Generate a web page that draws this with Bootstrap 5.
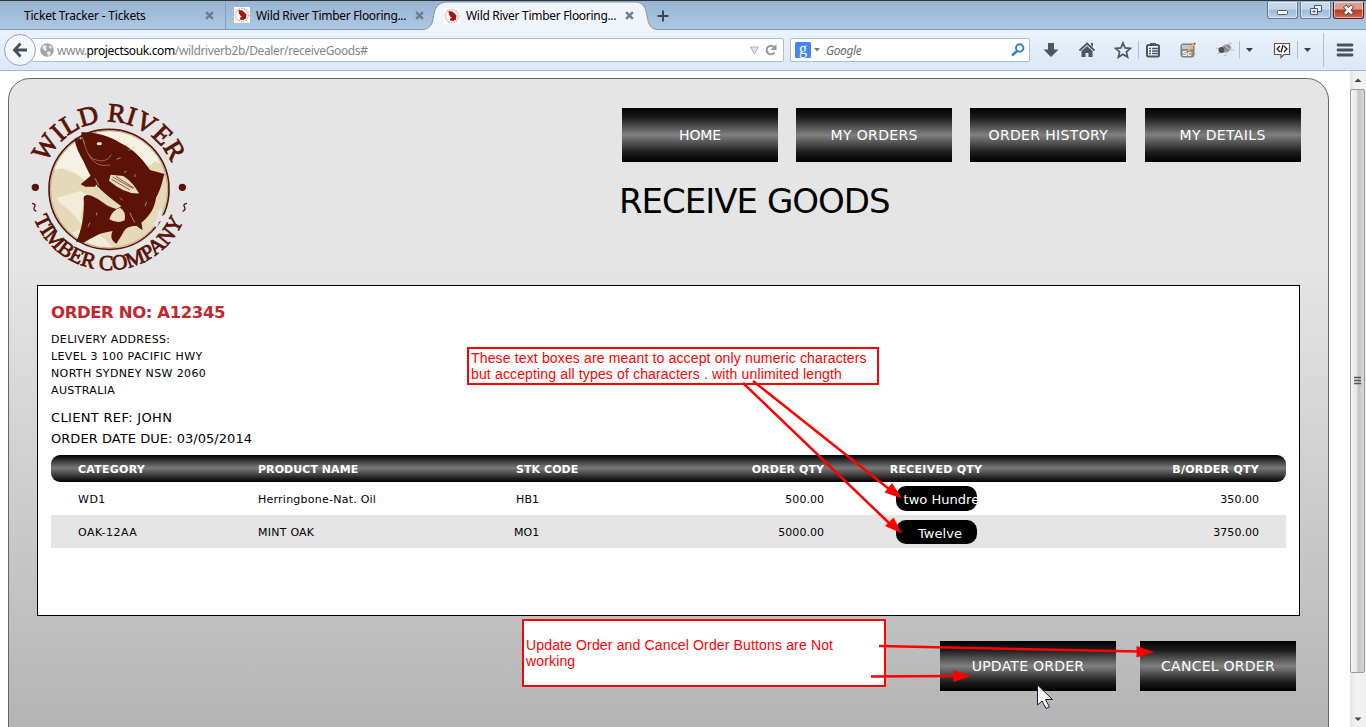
<!DOCTYPE html>
<html lang="en">
<head>
<meta charset="utf-8">
<title>Wild River Timber Flooring - Receive Goods</title>
<link href="https://cdn.jsdelivr.net/npm/bootstrap@5.3.0/dist/css/bootstrap.min.css" rel="stylesheet">
<style>
html,body{height:727px;overflow:hidden}
body{font-family:"DejaVu Sans",Verdana,sans-serif;font-size:11px;color:#000;background:#fff}
svg{display:block;flex:none}
/* browser window */
.chrome{height:71px;font-family:"Noto Sans","Open Sans",sans-serif;font-size:12px}
.tabstrip{height:30px;background:linear-gradient(#98b4d4,#aec8e2);border-top:1px solid #333;border-bottom:1px solid #809cb8}
.tab{height:28px;white-space:nowrap}
.tab span,.tab-front span{letter-spacing:-.3px;padding-top:1px}
.tab1{width:226px;padding-left:24px;border-right:1px solid #829fbe}
.tab1 span{letter-spacing:-.2px}
.tab2{width:207px;padding-left:8px}
.tab-front{width:216px;height:29px;margin-bottom:-1px;padding-left:11px;white-space:nowrap}
.tab-label{margin-left:6px}
.x1{margin-right:11px}.x2{margin-right:9px}.x3{margin-right:15px}
.tab-shape{left:-17px;top:0}
.winctl{gap:2px;margin-right:2px;padding-top:1px}
.winbtn{width:31px;height:17px;border:1px solid #5f7896;border-top:0;border-radius:0 0 3px 3px;background:linear-gradient(#c5d7ea 45%,#9fbad7 50%,#b9d0e8);box-shadow:inset 0 0 0 1px #ffffff80}
.winbtn.close-win{border-color:#5a1a1a;background:linear-gradient(#dc9c8e 45%,#b93a22 50%,#cf6a50)}
.navtools{height:41px;background:linear-gradient(#ebf2fb,#dae8f7);border-bottom:1px solid #9fb7d2}
.field{height:24px;background:#fff;border:1px solid #a9bdd3;border-radius:2px}
.url{width:753px;margin-left:-5px;padding-left:8px;color:#868686}
.url b{font-weight:400;color:#000}
.url-text{margin-left:3px;letter-spacing:-.36px;padding-top:2px}
.find{width:240px;margin-left:6px;padding:0 4px}
.find i{color:#6a6a6a;letter-spacing:-.4px;padding-top:2px}
.back{width:32px;height:32px;border-radius:50%;border:1px solid #8ea5be;background:#f5f9fd;margin-left:4px;z-index:2}
.toolset{margin-left:3px}
.tool{height:38px}
.vsep{width:1px;height:18px;background:#aebfd2}
.vsep-tall{height:34px}
/* page */
.page-area{height:656px}
.shell{width:1321px;height:720px;margin:7px 0 0 8px;border:1px solid #666;border-radius:22px 22px 0 0;background:linear-gradient(#e5e5e5 0,#e5e5e5 190px,#b3b3b3 660px)}
.head{height:206px;padding-left:14px}
.logo{margin:12px 0 0 -3px}
.menu{padding-top:29px;gap:18.2px;margin-left:422px}
.btn-steel{width:156px;height:54px;background:linear-gradient(#000,#1c1c1c 18%,#808080 50%,#1c1c1c 82%,#000);color:#fff;border:0;border-radius:0;padding:0;font-size:14px;line-height:54px;letter-spacing:.36px;white-space:nowrap}
.btn-steel:first-child{letter-spacing:-.1px}
.title{font-size:34px;line-height:40px;font-weight:400;margin:19px 0 0 419px;letter-spacing:-1px}
.panel{width:1263px;height:331px;margin-left:28px;border:1px solid #000;background:#fff;padding:16px 13px}
.order-no{font-size:16.5px;line-height:22px;font-weight:700;color:#c1272d;margin:0 0 7px;letter-spacing:-.4px}
address{line-height:17px;margin:0 0 8px;letter-spacing:.37px}
.ref{font-size:13px;line-height:21px}
.client{letter-spacing:.33px}
.due{letter-spacing:.05px}
.goods{table-layout:fixed;width:1235px;margin-top:6px;border-collapse:separate;border-spacing:0}
.goods th{height:27px;padding:3px 27px 0;color:#fff;font-weight:700;background:linear-gradient(#000,#7a7a7a 48%,#000);letter-spacing:.06px}
.goods th:first-child{border-radius:9px 0 0 9px;letter-spacing:.25px}
.goods th:last-child{border-radius:0 9px 9px 0;letter-spacing:.25px}
.goods td{height:33px;padding:3px 27px 0;letter-spacing:.03px}
.goods td:nth-child(1){letter-spacing:.5px}
.goods td:nth-child(2){letter-spacing:.24px}
.goods tbody tr:nth-child(2){background:#e5e5e5}
.goods th.mid{padding:3px 0 0;text-align:center;letter-spacing:.25px}
.goods td.mid{padding:0;text-align:center}
.code{display:inline-block;width:25px;text-align:right;margin-left:-2px}
.qty{display:block;width:81px;height:25px;margin:0 auto;background:#000;border:0;border-radius:10px;color:#fff;font-size:13px;padding:0 0 0 8px;white-space:nowrap;line-height:27px;text-align:left}
.qty-b{height:24px;position:relative}
.actions{padding:25px 32px 0 0;gap:24px}
.actions .btn-steel{height:50px;line-height:50px;letter-spacing:.25px}
.actions .wide{width:176px}
/* scrollbar */
.sbar{width:16px;background:linear-gradient(90deg,#e6e6e6,#f2f2f2 40%,#f0f0f0)}
.thumb{width:15px;height:584px;border:1px solid #999;border-radius:2px;background:linear-gradient(90deg,#f5f5f5,#e6e6e8 45%,#c6c6ca 55%,#d6d6da)}
/* review notes laid over the page */
.note{font-family:"Liberation Sans",Arial,sans-serif;font-size:14px;line-height:16px;letter-spacing:.15px;color:#f00;background:#fff;border:2px solid #f00;padding:0 2px;white-space:nowrap}
.note1{left:467px;top:347px;width:412px;height:38px;padding-top:1px}
.note2{left:522px;top:619px;width:364px;height:68px;padding-top:16px}
</style>
</head>
<body class="position-relative">
<svg width="0" height="0" class="position-absolute"><defs>
<symbol id="x" viewBox="0 0 8 8"><path d="M1 1l6 6M7 1L1 7" stroke="#6c7d90" stroke-width="2.200"/></symbol>
<symbol id="fav" viewBox="0 0 16 16"><path fill="#fff" d="M0 0h16v16H0z"/><circle cx="8" cy="8" r="6.600" fill="none" stroke="#dcb9b4" stroke-width="1.800" stroke-dasharray="1.500 1"/><path d="M4.500 3l4 .5 4 4-.5 4-3 1.500-3-.5v-2l1-1-2-3z" fill="#9c1a14"/><path d="M6 9l2 .5-1.500 1.500z" fill="#e8cfc8"/></symbol>
</defs></svg>
<header class="chrome">
  <div class="tabstrip d-flex">
    <div class="tab tab1 d-flex align-items-center"><span class="flex-grow-1">Ticket Tracker - Tickets</span><svg class="x1" width="9" height="9"><use href="#x"/></svg></div>
    <div class="tab tab2 d-flex align-items-center"><svg width="16" height="16"><use href="#fav"/></svg><span class="flex-grow-1 tab-label">Wild River Timber Flooring...</span><svg class="x2" width="9" height="9"><use href="#x"/></svg></div>
    <div class="tab-front d-flex align-items-center position-relative">
      <svg class="tab-shape position-absolute" width="244" height="30"><path d="M6 28.500c6 0 9.500-3 11-10 1.500-11 4-17 14-17.500H219C229 1 230 9 231.500 17c1 7 4 11.500 10 11.500V30H6z" fill="#f0f5fc"/><path d="M6 28.500c6 0 9.500-3 11-10 1.500-11 4-17 14-17.500H219C229 1 230 9 231.500 17c1 7 4 11.500 10 11.500" fill="none" stroke="#7c98b6"/></svg>
      <svg class="position-relative" width="16" height="16"><use href="#fav"/></svg><span class="flex-grow-1 position-relative tab-label">Wild River Timber Flooring...</span><svg class="position-relative x3" width="9" height="9"><use href="#x"/></svg>
    </div>
    <svg class="position-relative" width="28" height="28"><path d="M14 9.500v11M8.500 15h11" stroke="#3b4753" stroke-width="2"/></svg>
    <div class="winctl ms-auto d-flex">
      <div class="winbtn"><svg width="29" height="16"><rect x="9.500" y="8.500" width="10" height="4" rx="1" fill="#fff" stroke="#4d5a6b"/></svg></div>
      <div class="winbtn"><svg width="29" height="16" fill="#eef4fa" stroke="#4d5a6b"><path d="M13.500 3.500h7v6h-7z"/><path d="M9.500 6.500h7v6h-7z"/><path d="M12 9h2v1h-2z"/></svg></div>
      <div class="winbtn close-win"><svg width="29" height="16"><path d="M10.500 4l8 8M18.500 4l-8 8" stroke="#4d4550" stroke-width="4.400"/><path d="M11 4.500l7 7M18 4.500l-7 7" stroke="#fff" stroke-width="2.500"/></svg></div>
    </div>
  </div>
  <div class="navtools d-flex align-items-center">
    <div class="back d-flex align-items-center justify-content-center flex-shrink-0"><svg width="16" height="16"><path d="M8.500 1.500L2.500 8l6 6.500M3 8h12" fill="none" stroke="#46525e" stroke-width="2.800"/></svg></div>
    <div class="field url d-flex align-items-center flex-shrink-0">
      <svg width="14" height="14"><circle cx="7" cy="7" r="6.800" fill="#a3a3a3"/><path d="M2 3l3-1 2 1-1 2 1 2-2 1-2-2zM9 2l3 2-1 2-2-1zM8 8l3 1-1 3-2 1-1-3z" fill="#e9e9e9"/></svg>
      <span class="flex-grow-1 url-text">www.<b>projectsouk.com</b>/wildriverb2b/Dealer/receiveGoods#</span>
      <svg width="34" height="20"><path d="M1.500 7h8l-4 7z" fill="#dde3e8" stroke="#a9b4bf"/><path d="M25 7A4.300 4.300 0 1 0 25.500 12.500" fill="none" stroke="#8d99a6" stroke-width="2"/><path d="M27.500 4v6h-6z" fill="#8d99a6"/></svg>
    </div>
    <div class="field find d-flex align-items-center flex-shrink-0">
      <svg width="16" height="16"><rect width="16" height="16" rx="1.500" fill="#4285f4"/><text x="8" y="11.500" text-anchor="middle" font-family="Liberation Serif,serif" font-size="16" fill="#fff">g</text></svg>
      <svg width="15" height="16"><path d="M3 6h6l-3 3.500z" fill="#777"/></svg>
      <i class="flex-grow-1">Google</i>
      <svg width="14" height="14"><circle cx="8.700" cy="5" r="3.700" fill="none" stroke="#3680bd" stroke-width="2"/><path d="M6 8l-5 4.500" stroke="#3680bd" stroke-width="2.500"/></svg>
    </div>
    <div class="toolset d-flex align-items-center">
      <svg class="tool" width="36" height="38"><path d="M15 12h6v6.500h4.500L18 26l-7.500-7.500H15z" fill="#4d5762"/></svg>
      <svg class="tool" width="36" height="38"><path d="M10.500 19.500L18 12.500l7.500 7" fill="none" stroke="#4d5762" stroke-width="1.800"/><path d="M22 12h2v4l-2-2zM12.500 20L18 15l5.500 5v6h-4v-4h-3v4h-4z" fill="#4d5762"/></svg>
      <svg class="tool" width="33" height="38"><path d="M18 12l2.100 4.900 5.300.5-4 3.500 1.200 5.200L18 23.300l-4.600 2.800 1.200-5.200-4-3.500 5.300-.5z" fill="none" stroke="#4d5762" stroke-width="1.700"/></svg>
      <div class="vsep"></div>
      <svg class="tool" width="29" height="38"><rect x="8" y="14" width="12" height="11.500" rx="1.500" fill="#eef4fb" stroke="#4d5762" stroke-width="2"/><path d="M11 12h6v3h-6z" fill="#4d5762"/><path d="M10 17.500h2m1 0h6m-9 2.500h2m1 0h6m-9 2.500h2m1 0h6" stroke="#4d5762" stroke-width="1.300"/></svg>
      <svg class="tool" width="40" height="38"><rect x="13" y="13" width="13" height="13" rx="2" fill="#8d8d8d" stroke="#777"/><path d="M14 14h11v4H14z" fill="#c5c5c5"/><text x="14" y="25" font-family="Liberation Sans,sans-serif" font-weight="700" font-size="8" fill="#fff">Sc</text><path d="M26.500 12.500l-6 7" stroke="#e3bb4b" stroke-width="2"/><path d="M27 12l-1 1.300" stroke="#b34b31" stroke-width="2"/></svg>
      <svg class="tool" width="31" height="38"><path d="M8 17l5 1M9 23l4-2M16 24l3 1M23 19h3M20 13l4-1" stroke="#bbb"/><ellipse cx="18" cy="17.500" rx="5.500" ry="4" transform="rotate(-25 18 17.500)" fill="#a2a2a2"/><circle cx="13.500" cy="19" r="3" fill="#505050"/><path d="M16 16l4 4m-1-6l3 3" stroke="#666"/></svg>
      <div class="vsep"></div>
      <svg class="tool" width="20" height="38"><path d="M6 17h7l-3.500 4z" fill="#333f48"/></svg>
      <svg class="tool" width="37" height="38"><path d="M14.500 12.500h15v11H24l-3 3v-3h-6.500z" fill="#fff" stroke="#555" stroke-width="1.200"/><path d="M20 15l-3 3 3 3m4-6l3 3-3 3m-1-7l-2 7.500" fill="none" stroke="#222" stroke-width="1.300"/></svg>
      <div class="vsep"></div>
      <svg class="tool" width="25" height="38"><path d="M6 17h7l-3.500 4z" fill="#333f48"/></svg>
      <div class="vsep vsep-tall"></div>
      <svg class="tool" width="42" height="38"><path d="M14 14h14M14 19h14M14 24h14" stroke="#46525d" stroke-width="2.800" stroke-linecap="round"/></svg>
    </div>
  </div>
</header>

<div class="page-area d-flex overflow-hidden">
  <main class="flex-grow-1 overflow-hidden">
    <div class="shell">
      <div class="head d-flex">
        <svg class="logo" width="180" height="190" viewBox="0 0 540 570">
          <defs><path id="arcTop" d="M80 217A203 203 0 0 1 455 219"/><path id="arcBot" d="M42 383A242 242 0 0 0 493 383"/><clipPath id="disc"><circle cx="267" cy="295" r="175"/></clipPath></defs>
          <circle cx="267" cy="295" r="180" fill="#f6f2e3" stroke="#5a1708" stroke-width="5"/>
          <g clip-path="url(#disc)"><path d="M85 240l40-8 40 14 40 30 60 30 80-50 60-45 30 12 20 10v250H85z" fill="#e6d9b8"/><path d="M110 320l70-20 20 10-20 70 80 70 30 30h-120z" fill="#f3ecd6"/><path d="M110 330q50 30 80 80l-40 20q-40-40-60-90z" fill="#e6d9b8"/></g>
          <circle cx="267" cy="295" r="176" fill="none" stroke="#a5815f" stroke-width="2"/>
          <g fill="#5a1305">
            <path d="M184 124C225 122 270 136 300 155C345 176 372 210 390 237L433 249C426 278 420 300 408 320C404 350 392 372 364 395L368 418L350 405C330 404 315 410 308 428L289 458C275 450 270 437 278 420L262 423C235 427 216 442 190 455L168 452C185 420 194 370 191 318C198 309 210 311 222 318C247 330 260 348 290 354L304 346C275 325 250 305 232 286C215 262 202 238 190 210C179 190 170 175 164 148C164 138 172 138 184 146z"/>
            <path d="M218 249L182 280L196 287L226 287L232 270z"/>
          </g>
          <path d="M272 251L310 255Q340 275 357 307Q315 310 267 269z" fill="#e8dcbc"/>
          <path d="M278 258l60 34M275 265l55 32M288 256l55 36" stroke="#5a1305" stroke-width="2"/>
          <path d="M268 385Q275 358 300 350Q320 362 314 388Q294 400 268 385z" fill="#e8dcbc"/>
          <ellipse cx="238" cy="158" rx="8" ry="5" fill="#e8dcbc"/>
          <path d="M190 146Q200 195 222 205Q260 220 274 190M205 188Q225 232 270 222M187 138l7 20" fill="none" stroke="#b98c77" stroke-width="2"/>
          <path d="M326 178l20-12M312 245l8-5M290 205l12-5M345 250v8M300 320l8 8M210 395l-6 12M230 365v8M375 345l5-12M225 262l12 22M330 365q5 15 15 30" stroke="#dcc8ad" stroke-width="2" fill="none"/>
          <path d="M398 400l14-18 2-20 12-10-2 24 12-6-6 18-12 4-8 18z" fill="#e5e5e5"/>
          <g fill="#5a1305" font-family="Liberation Serif,serif" stroke="#5a1305" stroke-width="2.500">
            <text font-size="80"><textPath href="#arcTop" textLength="474" lengthAdjust="spacingAndGlyphs">WILD RIVER</textPath></text>
            <text font-size="64"><textPath href="#arcBot" textLength="574" lengthAdjust="spacingAndGlyphs">TIMBER COMPANY</textPath></text>
          </g>
          <g fill="#5a1305"><circle cx="46" cy="289" r="11"/><circle cx="487" cy="289" r="11"/></g>
          <path d="M36 337q14 2 7 12q-4 8 6 12M501 337q-14 2 -7 12q4 8 -6 12" fill="none" stroke="#5a1305" stroke-width="4"/>
        </svg>
        <div>
          <nav class="menu d-flex">
            <a class="btn btn-steel" href="#">HOME</a><a class="btn btn-steel" href="#">MY ORDERS</a><a class="btn btn-steel" href="#">ORDER HISTORY</a><a class="btn btn-steel" href="#">MY DETAILS</a>
          </nav>
          <h1 class="title">RECEIVE GOODS</h1>
        </div>
      </div>
      <section class="panel">
        <h2 class="order-no">ORDER NO: A12345</h2>
        <address>DELIVERY ADDRESS:<br>LEVEL 3 100 PACIFIC HWY<br>NORTH SYDNEY NSW 2060<br>AUSTRALIA</address>
        <div class="ref client">CLIENT REF: JOHN</div>
        <div class="ref due">ORDER DATE DUE: 03/05/2014</div>
        <table class="goods">
          <colgroup><col width="180"><col width="258"><col width="136"><col width="226"><col width="170"><col width="265"></colgroup>
          <thead><tr><th>CATEGORY</th><th>PRODUCT NAME</th><th>STK CODE</th><th class="text-end">ORDER QTY</th><th class="mid">RECEIVED QTY</th><th class="text-end">B/ORDER QTY</th></tr></thead>
          <tbody>
            <tr><td>WD1</td><td>Herringbone-Nat. Oil</td><td><span class="code">HB1</span></td><td class="text-end">500.00</td><td class="mid"><div class="qty">two Hundre</div></td><td class="text-end">350.00</td></tr>
            <tr><td>OAK-12AA</td><td>MINT OAK</td><td><span class="code">MO1</span></td><td class="text-end">5000.00</td><td class="mid"><div class="qty qty-b text-center">Twelve</div></td><td class="text-end">3750.00</td></tr>
          </tbody>
        </table>
      </section>
      <div class="actions d-flex justify-content-end">
        <button class="btn btn-steel wide">UPDATE ORDER</button><button class="btn btn-steel">CANCEL ORDER</button>
      </div>
    </div>
  </main>
  <div class="sbar flex-shrink-0 d-flex flex-column">
    <svg width="16" height="18"><path d="M4.500 11L8 7.500 11.500 11z" fill="#444"/></svg>
    <div class="thumb d-flex align-items-center"><svg width="13" height="12"><path d="M3 2.500h7M3 5.500h7M3 8.500h7" stroke="#555" stroke-width="1.500"/></svg></div>
    <svg class="mt-auto" width="16" height="16"><path d="M4.500 6.500L8 10l3.500-3.500z" fill="#444"/></svg>
  </div>
</div>

<div class="note note1 position-absolute">These text boxes are meant to accept only numeric characters<br>but accepting all types of characters . with unlimited length</div>
<div class="note note2 position-absolute">Update Order and Cancel Order Buttons are Not<br>working</div>
<svg class="position-absolute top-0 start-0 pe-none" width="1366" height="727">
  <g stroke="#f00" stroke-width="2.500"><path d="M753 381L889 489M743 383L889 523M879 646L1138 651.500M871 676.500L955 676"/></g>
  <g fill="#f00"><path d="M902 498.500l-17.500-6 7.500-9.500zM902 533.500l-17-7.500 8.500-8.500zM1154 652l-17.500 5.500V646zM971 676l-17.500 6v-12z"/></g>
  <path d="M1037.500 685v20l4.500-4 4 7.500 3.500-1.500-4-7.500h7z" fill="#f8f8f8" stroke="#1c1c38"/>
</svg>
<script src="https://cdn.jsdelivr.net/npm/bootstrap@5.3.0/dist/js/bootstrap.bundle.min.js"></script>
</body>
</html>
